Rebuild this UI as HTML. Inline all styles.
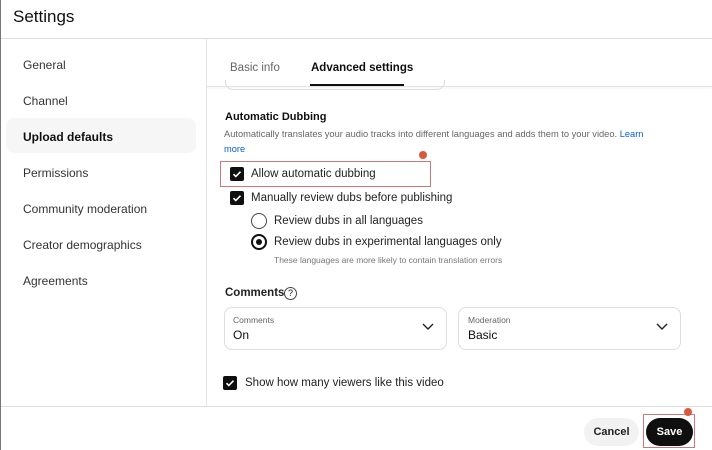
<!DOCTYPE html>
<html><head><style>
*{margin:0;padding:0;box-sizing:border-box}
body{width:712px;height:450px;overflow:hidden;background:#fff;font-family:"Liberation Sans",Arial,sans-serif;color:#0f0f0f;position:relative}
.a{position:absolute;white-space:nowrap}
.cb{position:absolute;width:14px;height:14px;background:#0f0f0f;border-radius:2px}
.cb svg{position:absolute;left:1px;top:1px}
.rd{position:absolute;width:16px;height:16px;border:2px solid #0f0f0f;border-radius:50%}
.sel{position:absolute;border:1px solid #ddd;border-radius:8px;height:43px}
</style></head><body>
<div class="a" style="left:0;top:0;width:1px;height:450px;background:#777"></div>
<div class="a" style="left:13px;top:7px;font-size:17px">Settings</div>
<div class="a" style="left:1px;top:38px;width:711px;height:1px;background:#ddd"></div>
<div class="a" style="left:206px;top:39px;width:1px;height:367px;background:#e5e5e5"></div>
<div class="a" style="left:6px;top:118px;width:190px;height:35px;background:#f6f6f6;border-radius:8px"></div>
<div class="a" style="left:23px;top:58px;font-size:12px;color:#333">General</div>
<div class="a" style="left:23px;top:94px;font-size:12px;color:#333">Channel</div>
<div class="a" style="left:23px;top:130px;font-size:12px;font-weight:bold">Upload defaults</div>
<div class="a" style="left:23px;top:166px;font-size:12px;color:#333">Permissions</div>
<div class="a" style="left:23px;top:202px;font-size:12px;color:#333">Community moderation</div>
<div class="a" style="left:23px;top:238px;font-size:12px;color:#333">Creator demographics</div>
<div class="a" style="left:23px;top:274px;font-size:12px;color:#333">Agreements</div>
<div class="a" style="left:207px;top:86px;width:505px;height:1px;background:#e3e3e3;box-shadow:0 1px 2px rgba(0,0,0,.08)"></div>
<div class="a" style="left:230px;top:62px;font-size:11.5px;color:#666">Basic info</div>
<div class="a" style="left:311px;top:62px;font-size:11.5px;font-weight:bold">Advanced settings</div>
<div class="a" style="left:310px;top:84px;width:94px;height:2px;background:#0f0f0f"></div>
<div class="a" style="left:225px;top:80px;width:220px;height:10px;border:1px solid #ddd;border-top:none;border-radius:0 0 8px 8px"></div>
<div class="a" style="left:225px;top:111px;font-size:11px;font-weight:bold">Automatic Dubbing</div>
<div class="a" style="left:224px;top:129px;font-size:9.3px;color:#666">Automatically translates your audio tracks into different languages and adds them to your video. <span style="color:#065fd4">Learn</span></div>
<div class="a" style="left:224px;top:144px;font-size:9.3px;color:#065fd4">more</div>
<div class="a" style="left:220px;top:161px;width:211px;height:26px;border:1px solid #c97b7b"></div>
<div class="a" style="left:419px;top:151px;width:8px;height:8px;border-radius:50%;background:#d9583b"></div>
<div class="cb" style="left:230px;top:167px"><svg width="12" height="12" viewBox="0 0 12 12"><path d="M2.5 6.2l2.3 2.3 4.7-4.8" stroke="#fff" stroke-width="1.6" fill="none"/></svg></div>
<div class="a" style="left:251px;top:168px;font-size:11.5px;color:#222">Allow automatic dubbing</div>
<div class="cb" style="left:230px;top:191px"><svg width="12" height="12" viewBox="0 0 12 12"><path d="M2.5 6.2l2.3 2.3 4.7-4.8" stroke="#fff" stroke-width="1.6" fill="none"/></svg></div>
<div class="a" style="left:251px;top:192px;font-size:11.5px;color:#222">Manually review dubs before publishing</div>
<div class="rd" style="left:251px;top:213px;border-width:1.3px;border-color:#444"></div>
<div class="a" style="left:274px;top:215px;font-size:11.5px;color:#222">Review dubs in all languages</div>
<div class="rd" style="left:251px;top:234px"><div style="position:absolute;left:3px;top:3px;width:6px;height:6px;border-radius:50%;background:#0f0f0f"></div></div>
<div class="a" style="left:274px;top:236px;font-size:11.5px;color:#222">Review dubs in experimental languages only</div>
<div class="a" style="left:274px;top:255px;font-size:8.5px;color:#777">These languages are more likely to contain translation errors</div>
<div class="a" style="left:225px;top:287px;font-size:11.5px;font-weight:bold;color:#222">Comments</div>
<div class="a" style="left:284px;top:287px;width:13px;height:13px;border:1px solid #444;border-radius:50%;font-size:9px;text-align:center;line-height:11px">?</div>
<div class="sel" style="left:224px;top:307px;width:223px"></div>
<div class="a" style="left:233px;top:315px;font-size:8.5px;color:#666">Comments</div>
<div class="a" style="left:233px;top:328px;font-size:12px">On</div>
<svg class="a" style="left:421px;top:322px" width="14" height="9" viewBox="0 0 14 9"><path d="M2 2l5 5 5-5" stroke="#222" stroke-width="1.4" fill="none"/></svg>
<div class="sel" style="left:458px;top:307px;width:223px"></div>
<div class="a" style="left:468px;top:315px;font-size:8.5px;color:#666">Moderation</div>
<div class="a" style="left:468px;top:328px;font-size:12px">Basic</div>
<svg class="a" style="left:655px;top:322px" width="14" height="9" viewBox="0 0 14 9"><path d="M2 2l5 5 5-5" stroke="#222" stroke-width="1.4" fill="none"/></svg>
<div class="cb" style="left:223px;top:376px"><svg width="12" height="12" viewBox="0 0 12 12"><path d="M2.5 6.2l2.3 2.3 4.7-4.8" stroke="#fff" stroke-width="1.6" fill="none"/></svg></div>
<div class="a" style="left:245px;top:377px;font-size:11.5px;color:#222">Show how many viewers like this video</div>
<div class="a" style="left:1px;top:406px;width:711px;height:1px;background:#ddd"></div>
<div class="a" style="left:584px;top:418px;width:55px;height:28px;border-radius:14px;background:#f2f2f2;font-size:11px;font-weight:bold;text-align:center;line-height:28px;color:#222">Cancel</div>
<div class="a" style="left:643px;top:414px;width:52px;height:34px;border:1px solid #c97b7b"></div>
<div class="a" style="left:646px;top:418px;width:47px;height:28px;border-radius:14px;background:#0f0f0f;color:#fff;font-size:11px;font-weight:bold;text-align:center;line-height:28px">Save</div>
<div class="a" style="left:684px;top:408px;width:8px;height:8px;border-radius:50%;background:#d9583b"></div>
</body></html>
